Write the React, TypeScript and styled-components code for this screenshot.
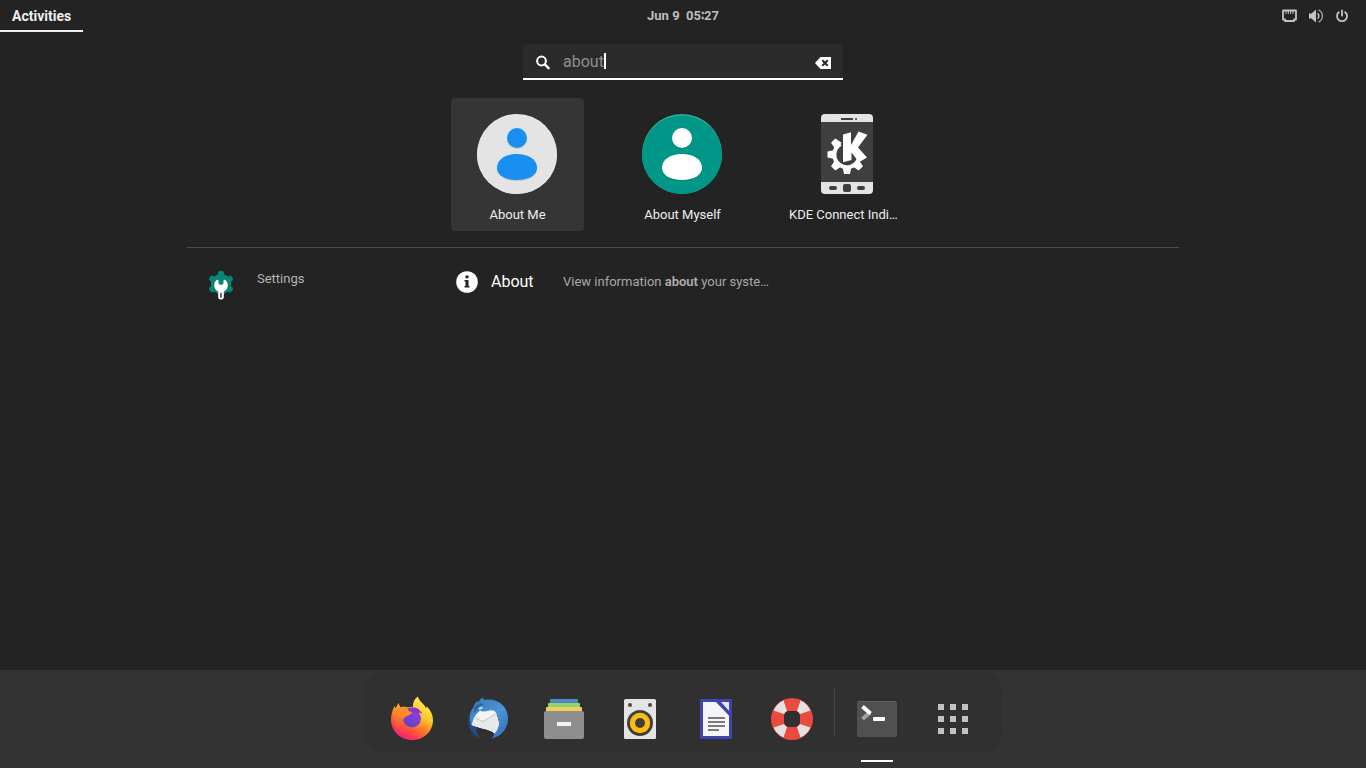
import React, { useState } from "react";
import styled, { createGlobalStyle } from "styled-components";

const GlobalStyle = createGlobalStyle`
  * { box-sizing: border-box; }
  body {
    margin: 0;
    background: #232323;
    color: #eeeeee;
    font-family: Roboto, "Liberation Sans", sans-serif;
    font-size: 13px;
    line-height: 16px;
  }
  button, input { font: inherit; color: inherit; }
  button {
    margin: 0;
    padding: 0;
    border: 0;
    background: none;
    cursor: pointer;
  }
  svg { display: block; flex: none; overflow: visible; }
`;

const Screen = styled.div`
  min-height: 100vh;
  display: flex;
  flex-direction: column;
`;

const TopBar = styled.header`
  height: 32px;
  display: grid;
  grid-template-columns: 1fr auto 1fr;
  align-items: stretch;
  font-weight: 700;
`;

const ActivitiesButton = styled.button`
  && { font-weight: 700; font-size: 14px; }
  justify-self: start;
  padding: 1px 12px 0;
  border-bottom: 2px solid #eeeeec;
`;

const ClockButton = styled.button`
  && { font-weight: 700; }
  color: #bdbdbd;
  white-space: pre;
`;

const StatusButton = styled.button`
  justify-self: end;
  display: flex;
  align-items: center;
  gap: 10px;
  padding-right: 16px;
  color: #c4c4c4;
`;

const Main = styled.main`
  flex: 1;
  display: flex;
  flex-direction: column;
  align-items: center;
  padding: 12px 16px;
`;

const SearchBox = styled.label`
  width: 100%;
  max-width: 320px;
  height: 36px;
  display: flex;
  align-items: center;
  padding: 0 12px;
  background: #2b2b2b;
  border-bottom: 2px solid #ffffff;
  border-radius: 3px 3px 0 0;
  cursor: text;
`;

const SearchInput = styled.input`
  && { color: #8f8f8f; font-size: 16px; }
  field-sizing: content;
  max-width: 230px;
  height: 20px;
  margin-left: 12px;
  padding: 0;
  border: 0;
  outline: 0;
  background: none;
  caret-color: transparent;
`;

const Caret = styled.span`
  width: 2px;
  height: 16px;
  background: #ffffff;
`;

const ClearButton = styled.button`
  margin-left: auto;
  color: #ffffff;
`;

const Results = styled.div`
  width: 100%;
  max-width: 992px;
  margin-top: 18px;
`;

const AppGrid = styled.section`
  display: flex;
  justify-content: center;
  flex-wrap: wrap;
  gap: 32px;
  padding: 0 1px 16px 0;
  border-bottom: 1px solid #4c4c4c;
`;

const AppTile = styled.button<{ $selected?: boolean }>`
  width: 133px;
  height: 133px;
  display: flex;
  flex-direction: column;
  align-items: flex-start;
  gap: 13px;
  padding: 16px 8px 8px;
  border-radius: 4px;
  background: ${(p) => (p.$selected ? "#353535" : "transparent")};
  svg { margin-left: 18px; }
`;

const AppLabel = styled.span<{ $shortened?: boolean }>`
  width: 100%;
  text-align: ${(p) => (p.$shortened ? "left" : "center")};
  white-space: nowrap;
`;

const ProviderRow = styled.section`
  display: flex;
  align-items: flex-start;
  padding: 23px 20px;
`;

const ProviderButton = styled.button`
  width: 249px;
  display: flex;
  align-items: flex-start;
  gap: 22px;
  color: #b4b4b4;
`;

const ResultButton = styled.button`
  display: flex;
  align-items: center;
  gap: 13px;
  text-align: left;
`;

const ResultTitle = styled.span`
  width: 59px;
  font-size: 16px;
  line-height: 22px;
  color: #ffffff;
`;

const ResultText = styled.span`
  color: #a8a8a8;
  white-space: nowrap;
`;

const DockBar = styled.footer`
  height: 98px;
  display: flex;
  justify-content: center;
  align-items: flex-start;
  padding-top: 1px;
  background: #333333;
  border-top: 1px solid #373737;
`;

const Dock = styled.nav`
  display: flex;
  align-items: center;
  gap: 12px;
  height: 80px;
  padding: 0 17px 0 16px;
  border-radius: 20px;
  background: #303030;
`;

const DockButton = styled.button<{ $running?: boolean }>`
  position: relative;
  align-self: flex-end;
  width: 64px;
  height: 68px;
  display: grid;
  place-items: center;
  &::after {
    content: "";
    display: ${(p) => (p.$running ? "block" : "none")};
    position: absolute;
    left: 16px;
    bottom: -10px;
    width: 32px;
    height: 2px;
    background: #ffffff;
  }
`;

const DockDivider = styled.span`
  width: 1px;
  height: 48px;
  margin: 0 -2px;
  background: #444444;
`;

const NetworkIcon = () => (
  <svg width="16" height="16" viewBox="1 0 16 16" fill="none" aria-hidden="true">
    <path d="M2 2.500h13v9h-2v1.500h-9v-1.500h-2z" stroke="currentColor" strokeWidth="1.800" strokeLinejoin="round" />
    <path d="M5 3v3M7.300 3v3M9.700 3v3M12 3v3" stroke="currentColor" />
  </svg>
);

const VolumeIcon = () => (
  <svg width="16" height="16" viewBox="0 0 16 16" fill="none" aria-hidden="true">
    <path d="M1 5.500h2.500L8 1.500v13L3.500 10.500H1z" fill="currentColor" />
    <path d="M9.500 5.300a3.500 3.500 0 0 1 0 5.400" stroke="currentColor" strokeWidth="1.500" />
    <path d="M10.500 1.900a6.700 6.700 0 0 1 0 12.200" stroke="currentColor" strokeWidth="1.400" opacity=".75" />
  </svg>
);

const PowerIcon = () => (
  <svg width="16" height="16" viewBox="0 0 16 16" fill="none" stroke="currentColor" strokeWidth="1.800" strokeLinecap="round" aria-hidden="true">
    <path d="M4.800 4.300a5 5 0 1 0 6.400 0M8 2.500v5" />
  </svg>
);

const SearchIcon = () => (
  <svg width="16" height="16" viewBox="0 -1 16 16" fill="none" stroke="#ffffff" aria-hidden="true">
    <circle cx="6.500" cy="7" r="4.400" strokeWidth="2" />
    <path d="M9.800 10.400l4.500 4.500" strokeWidth="2.400" />
  </svg>
);

const ClearIcon = () => (
  <svg width="16" height="16" viewBox="0 -1 16 16" aria-hidden="true">
    <path d="M5.500 3H16v12H5.500L0 9z" fill="currentColor" />
    <path d="M7.300 6.300l5.400 5.400M12.700 6.300l-5.400 5.400" stroke="#2b2b2b" strokeWidth="2" />
  </svg>
);

const PersonIcon = ({ back, edge, figure }: { back: string; edge: string; figure: string }) => (
  <svg width="80" height="80" viewBox="0 0 80 80" aria-hidden="true">
    <circle cx="40" cy="40" r="40" fill={edge} />
    <path d="M0 41a40 39 0 0 0 80 0a40 39.500 0 0 0-80 0z" fill={back} />
    <g fill="#000000" opacity=".12">
      <circle cx="40" cy="25" r="10" />
      <path d="M20 55c0-9 9-14 20-14s20 5 20 14c0 7-8 12-20 12s-20-5-20-12z" />
    </g>
    <g fill={figure}>
      <circle cx="40" cy="24" r="10" />
      <path d="M20 54c0-9 9-14 20-14s20 5 20 14c0 7-8 12-20 12s-20-5-20-12z" />
    </g>
  </svg>
);

const KdeConnectIcon = () => (
  <svg width="80" height="80" viewBox="0 0 80 80" aria-hidden="true">
    <rect x="14" width="52" height="80" rx="4" fill="#e4e4e4" />
    <rect x="14" y="8" width="52" height="60" fill="#3f3f3f" />
    <path d="M34 5h12" stroke="#3f3f3f" strokeWidth="2" />
    <circle cx="49" cy="5" r="1" fill="#3f3f3f" />
    <g fill="#3f3f3f">
      <rect x="22" y="72" width="8" height="4" rx="2" />
      <rect x="36" y="70" width="8" height="8" rx="2" />
      <rect x="50" y="72" width="8" height="4" rx="2" />
    </g>
    <path d="M33.500 30A12.500 12.500 0 1 0 52 44" fill="none" stroke="#ffffff" strokeWidth="4" />
    <g fill="#ffffff">
      {[45, 90, 135, 180, 225].map((angle) => (
        <path key={angle} d="M12 -4.500L19.500 -3V3L12 4.500z" transform={`translate(40 40.500) rotate(${angle})`} />
      ))}
      <path d="M36 20.500L44 18.200V31L51.500 17.500L60.500 20.700L51 33.500L60 43.500L52 48.300L44.500 38.500V46L36 48.300z" />
    </g>
  </svg>
);

const SettingsIcon = () => (
  <svg width="28" height="28" viewBox="0 -1 28 28" aria-hidden="true">
    <g fill="#0b8573">
      <path d="M14 .5l10 5.700v11.600L14 23.500 4 17.800V6.200z" />
      {[30, 90, 150, 210, 270, 330].map((angle) => (
        <rect key={angle} x="6" y="-3" width="7" height="6" rx="2" transform={`translate(14 12) rotate(${angle})`} />
      ))}
    </g>
    <path d="M11.500 8.500v3l1.200 1.300h2.600l1.200-1.300v-3c.5-.8 1-.8 1.600-.4 1.800 1.200 2.700 3 2.700 5.200 0 2.900-1.600 5.200-4 6.200v5.500a2.800 2.500 0 0 1-5.600 0v-5.500c-2.400-1-4-3.300-4-6.200 0-2.200.9-4 2.700-5.200.6-.4 1.100-.4 1.600.4z" fill="#ffffff" />
    <path d="M14 21.500v3.500" stroke="#6a6a6a" strokeWidth="2" strokeLinecap="round" />
  </svg>
);

const InfoIcon = () => (
  <svg width="22" height="22" viewBox="0 0 22 22" aria-hidden="true">
    <circle cx="11" cy="11" r="10.800" fill="#ffffff" />
    <path d="M9.500 4.500h3v2.800h-3zM8.500 9h4v6h1v1.500h-5V15h1v-4.500h-1z" fill="#232323" />
  </svg>
);

const FirefoxIcon = () => (
  <svg width="48" height="48" viewBox="0 0 48 48" aria-hidden="true">
    <defs>
      <linearGradient id="fox-body" x1="36" y1="6" x2="14" y2="44" gradientUnits="userSpaceOnUse">
        <stop offset="0" stopColor="#fff04a" />
        <stop offset=".35" stopColor="#ffc52e" />
        <stop offset=".6" stopColor="#ff7a2a" />
        <stop offset=".85" stopColor="#ff3a50" />
        <stop offset="1" stopColor="#f0227e" />
      </linearGradient>
      <linearGradient id="fox-globe" x1="28" y1="15" x2="20" y2="34" gradientUnits="userSpaceOnUse">
        <stop offset="0" stopColor="#9a3ae0" />
        <stop offset="1" stopColor="#5a46c4" />
      </linearGradient>
      <linearGradient id="fox-head" x1="10" y1="10" x2="14" y2="36" gradientUnits="userSpaceOnUse">
        <stop offset="0" stopColor="#ffa01f" />
        <stop offset="1" stopColor="#ff4b42" />
      </linearGradient>
    </defs>
    <path d="M29.700 2.500c1.200 4 3.800 5.500 6.500 8.700 1 1.200 1.400 2 1.800 3.200l.8-2.200c3.900 4.100 6.200 8.700 6.200 13.800C45 37.500 35.800 46 24 46S3 37 3 25.500c0-5.500 1.500-9.500 3.500-13.500l1 2.500 3.200-5.500c.3 2 .8 3.200 2 4.300 2.500-.8 5-.6 7 .2 1.700-.7 3.500-1 5.300-.8-.3-4.200 1.500-7.700 4.700-10.200z" fill="url(#fox-body)" />
    <path d="M6 15l1.500-.8 3.200-5c.3 2 .8 3.200 2 4.300 3-.6 6 0 7.300 1.300l-2 18c.5 1 2.500 2.500 4.500 3-4.500 3-13 1-15.500-5.500C5.600 25 5 19 6 15z" fill="url(#fox-head)" />
    <circle cx="24" cy="24.500" r="9" fill="url(#fox-globe)" />
    <path d="M18.500 15.500c3-3 10-3 13 .7 1.300 1.200 2.300 2.200 2.500 4-2-1.800-3-1.600-4.500-1.400-3 .3-8-.8-11-3.300z" fill="#8b35cf" />
    <path d="M12 13.700c3-.8 6 0 8 1.600-.2 1 .8 2 2.500 2.300l1.500.4c.4 1.600-2.800 3.200-5 4-2 .8-3.500 2-4 3.700l-4.500-5z" fill="#ff8c25" />
  </svg>
);

const ThunderbirdIcon = () => (
  <svg width="48" height="48" viewBox="0 0 48 48" aria-hidden="true">
    <defs>
      <linearGradient id="bird-body" x1="12" y1="6" x2="40" y2="42" gradientUnits="userSpaceOnUse">
        <stop offset="0" stopColor="#3f7dbd" />
        <stop offset=".5" stopColor="#4a94d8" />
        <stop offset="1" stopColor="#3674bd" />
      </linearGradient>
    </defs>
    <path d="M7.500 16c-3.800 6-4.300 13-1 19.500 2 4 5.500 7 10 8.500-2.500-2.700-3.700-4.500-4-7L14 20z" fill="#2a4a86" />
    <path d="M19.500 3.300c-.2 1.500 0 2.200.6 2.700C33 3.500 44 12 44 24.500c0 9.300-5.500 17.500-16.500 20 2.300-2.200 3.200-4 2.800-6.500L35 29l-2-9-15-2-7 6c-2 2-3.300 5-3.300 7.500C5 25 5.500 17.500 9.500 13c1-3.500 2.500-5 4.500-6.500v2.300c1.500-2.700 3-4.500 5.500-5.500z" fill="url(#bird-body)" />
    <path d="M10 14c1-2 2.600-3.200 4.500-4 2.500-1 4.500-.8 6 .3-3 .8-5 2.200-6.500 4.700-1 1.500-2.500 2.500-4 4z" fill="#2d66a5" />
    <path d="M14 15c1.500-2.500 4-3 5-1.200-1.200 1.700-3 2-5 1.200z" fill="#b9dcf5" />
    <path d="M7.500 31l2.200-6.500 2.300-4 4-4c2.500 1.500 5.500 1 8.500.3 4-1 6.500-.5 8 3L35 29c-.5 4-2 8-4.500 10.500-2.500-3-6.500-4.200-10.500-4.700-4-1-8-2.300-12.500-3.800z" fill="#f3f4f5" />
    <path d="M11 25l7.500 3L32.500 20l2.500 9c-.5 4-2 8-4.500 10.500-6-5-14-4.500-23-8.500z" fill="#e8e9eb" />
    <path d="M11 24l8 3.500L32 19.800" fill="none" stroke="#bfc1c5" />
  </svg>
);

const FilesIcon = () => (
  <svg width="48" height="48" viewBox="0 0 48 48" aria-hidden="true">
    <rect x="10" y="5" width="28" height="6" rx="1" fill="#4f87c7" />
    <rect x="8" y="9" width="32" height="6" rx="1" fill="#8fd36b" />
    <rect x="6" y="13" width="36" height="6" rx="1" fill="#f2cd60" />
    <rect x="4" y="17" width="40" height="28" rx="2" fill="#8e8e8e" />
    <rect x="17" y="28" width="14" height="4" fill="#f2f2f2" />
  </svg>
);

const SpeakerIcon = () => (
  <svg width="48" height="48" viewBox="0 0 48 48" aria-hidden="true">
    <rect x="8" y="5" width="32" height="40" rx="1.500" fill="#e4e4e4" />
    <circle cx="14" cy="11" r="2" fill="#4a4a4a" />
    <circle cx="34" cy="11" r="2" fill="#4a4a4a" />
    <circle cx="24" cy="29" r="13" fill="#443d36" />
    <circle cx="24" cy="29" r="10.200" fill="#f8bd14" />
    <circle cx="24" cy="29" r="5" fill="#443d36" />
  </svg>
);

const WriterIcon = () => (
  <svg width="48" height="48" viewBox="0 0 48 48" aria-hidden="true">
    <rect x="8" y="5" width="32" height="40" rx="1" fill="#3c46ae" />
    <path d="M11 8h14l12 12v22H11z" fill="#f5f5f8" />
    <path d="M29 8h8v9z" fill="#e6e7f2" />
    <path d="M25 7L38.500 21" stroke="#3c46ae" strokeWidth="3" />
    <path d="M16 24h17M16 28h17M16 32h17M16 36h11" stroke="#7a7a7a" strokeWidth="2" />
  </svg>
);

const HelpIcon = () => (
  <svg width="48" height="48" viewBox="0 0 48 48" aria-hidden="true">
    <circle cx="24" cy="25" r="21" fill="#eb4a3e" />
    {[0, 90, 180, 270].map((angle) => (
      <path key={angle} d="M8.500 -18.500A20.400 20.400 0 0 1 18.500 -8.500L8 -5L5 -8z" fill="#e7e2e2" transform={`translate(24 25) rotate(${angle})`} />
    ))}
    <rect x="16" y="17" width="16" height="16" rx="5" fill="#303030" />
  </svg>
);

const TerminalIcon = () => (
  <svg width="48" height="48" viewBox="0 0 48 48" fill="none" aria-hidden="true">
    <rect x="4" y="7" width="40" height="36" rx="1.500" fill="#505050" />
    <path d="M5.500 7.500h37" stroke="#606060" />
    <path d="M17 18.500l-7.500 6.500" stroke="#a0a0a0" strokeWidth="4" />
    <path d="M9.500 12.500l8 7" stroke="#ffffff" strokeWidth="4" />
    <rect x="20" y="23" width="12" height="4" rx="1" fill="#ffffff" />
  </svg>
);

const GridIcon = () => (
  <svg width="48" height="48" viewBox="0 0 48 48" fill="#c2c2c2" aria-hidden="true">
    {[10, 22, 34].map((y) => (
      <path key={y} d={`M9 ${y}h6v6h-6zM21 ${y}h6v6h-6zM33 ${y}h6v6h-6z`} />
    ))}
  </svg>
);

const apps = [
  { name: "About Me", icon: <PersonIcon back="#e4e4e4" edge="#e9e9e9" figure="#1a8ff2" /> },
  { name: "About Myself", icon: <PersonIcon back="#009688" edge="#33aba0" figure="#ffffff" /> },
  { name: "KDE Connect Indi…", icon: <KdeConnectIcon /> },
];

const favorites = [
  { name: "Firefox", Icon: FirefoxIcon },
  { name: "Thunderbird", Icon: ThunderbirdIcon },
  { name: "Files", Icon: FilesIcon },
  { name: "Rhythmbox", Icon: SpeakerIcon },
  { name: "LibreOffice Writer", Icon: WriterIcon },
  { name: "Help", Icon: HelpIcon },
];

export default function App() {
  const [query, setQuery] = useState("about");

  return (
    <Screen>
      <GlobalStyle />
      <TopBar>
        <ActivitiesButton>Activities</ActivitiesButton>
        <ClockButton>{"Jun 9  05∶27"}</ClockButton>
        <StatusButton aria-label="System menu">
          <NetworkIcon />
          <VolumeIcon />
          <PowerIcon />
        </StatusButton>
      </TopBar>

      <Main>
        <SearchBox>
          <SearchIcon />
          <SearchInput aria-label="Search" value={query} onChange={(e) => setQuery(e.target.value)} />
          <Caret />
          <ClearButton aria-label="Clear search" onClick={() => setQuery("")}>
            <ClearIcon />
          </ClearButton>
        </SearchBox>

        <Results>
          <AppGrid>
            {apps.map((app, i) => (
              <AppTile key={app.name} $selected={i === 0}>
                {app.icon}
                <AppLabel $shortened={app.name.endsWith("…")}>{app.name}</AppLabel>
              </AppTile>
            ))}
          </AppGrid>
          <ProviderRow>
            <ProviderButton>
              <SettingsIcon />
              <span>Settings</span>
            </ProviderButton>
            <ResultButton>
              <InfoIcon />
              <ResultTitle>About</ResultTitle>
              <ResultText>
                View information <b>about</b> your syste…
              </ResultText>
            </ResultButton>
          </ProviderRow>
        </Results>
      </Main>

      <DockBar>
        <Dock aria-label="Dash">
          {favorites.map(({ name, Icon }) => (
            <DockButton key={name} aria-label={name}>
              <Icon />
            </DockButton>
          ))}
          <DockDivider />
          <DockButton aria-label="Terminal" $running>
            <TerminalIcon />
          </DockButton>
          <DockButton aria-label="Show applications">
            <GridIcon />
          </DockButton>
        </Dock>
      </DockBar>
    </Screen>
  );
}
